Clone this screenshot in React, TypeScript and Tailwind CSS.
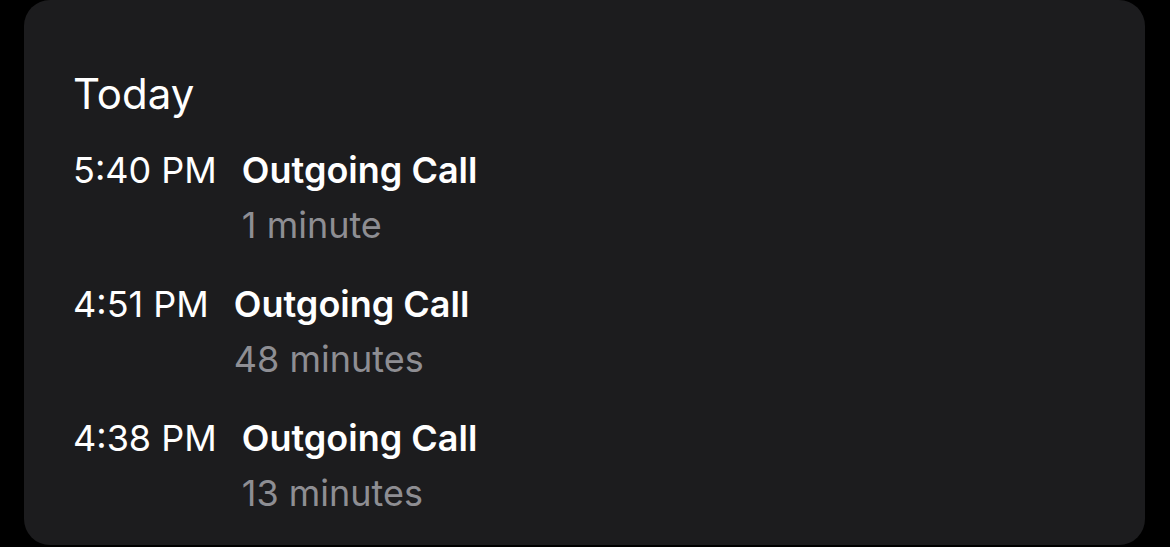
const calls = [
  { time: '5:40 PM', title: 'Outgoing Call', duration: '1 minute' },
  { time: '4:51 PM', title: 'Outgoing Call', duration: '48 minutes' },
  { time: '4:38 PM', title: 'Outgoing Call', duration: '13 minutes' },
];

export default function App() {
  return (
    <div
      className="w-[1170px] h-[547px] bg-black pl-[24px] pr-[25px] pb-[2px]"
      style={{ fontFamily: 'Inter, "Noto Sans", sans-serif' }}
    >
      <div className="h-full rounded-[26px] bg-[#1c1c1e] pl-[49px] pt-[70px]">
        <h2 className="text-[42px] leading-[48px] text-white">Today</h2>

        <ul className="mt-[25px] flex flex-col gap-[24px]">
          {calls.map((call, i) => (
            <li key={i} className="flex gap-[25px] text-[36px] leading-[55px]">
              <span className="text-white">{call.time}</span>
              <div>
                <div className="font-semibold text-white">{call.title}</div>
                <div className="text-[#8e8e93]">{call.duration}</div>
              </div>
            </li>
          ))}
        </ul>
      </div>
    </div>
  );
}
